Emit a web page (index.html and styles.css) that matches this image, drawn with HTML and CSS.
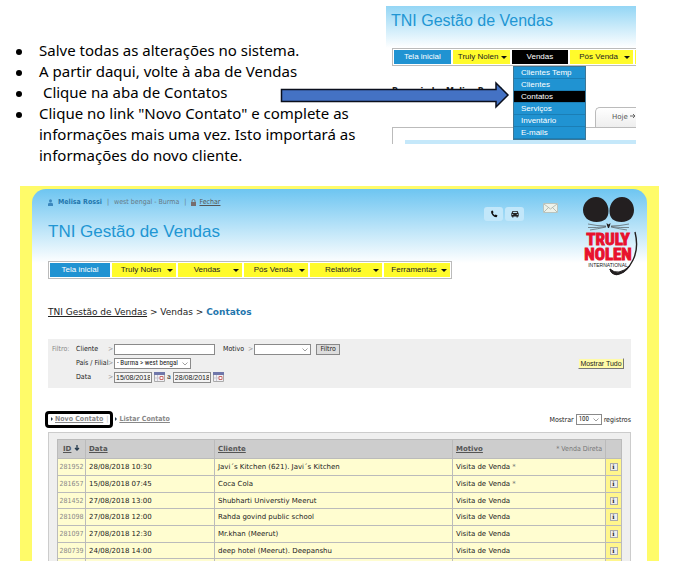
FILE: index.html
```html
<!DOCTYPE html>
<html lang="pt">
<head>
<meta charset="utf-8">
<title>TNI Gestão de Vendas</title>
<link rel="stylesheet" href="styles.css">
</head>
<body>
<section class="intro">
  <ul class="steps">
    <li>Salve todas as alterações no sistema.</li>
    <li>A partir daqui, volte à aba de Vendas</li>
    <li>&nbsp;Clique na aba de Contatos</li>
    <li>Clique no link "Novo Contato" e complete as informações mais uma vez. Isto importará as informações do novo cliente.</li>
  </ul>
  <div class="preview">
    <h2 class="title preview-title">TNI Gestão de Vendas</h2>
    <nav class="nav preview-nav">
      <a class="item home" href="#">Tela inicial</a>
      <a class="item drop" href="#">Truly Nolen</a>
      <a class="item open" href="#">Vendas</a>
      <a class="item drop wide" href="#">Pós Venda</a>
      <a class="item" href="#" aria-label="Relatórios"></a>
    </nav>
    <p class="welcome">Bem-vindo, Melisa Rossi</p>
    <div class="tab">Hoje <svg width="6" height="6" viewBox="0 0 6 6"><path d="M0 3h5M3 1l2 2-2 2" fill="none" stroke="#666"/></svg></div>
    <div class="sheet"><div class="sheet-bar"></div></div>
    <div class="menu">
      <a href="#">Clientes Temp</a>
      <a href="#">Clientes</a>
      <a class="current" href="#">Contatos</a>
      <a href="#">Serviços</a>
      <a href="#">Inventário</a>
      <a href="#">E-mails</a>
    </div>
    <svg class="arrow" width="230" height="28" viewBox="0 0 230 28"><path d="M1.500 8.500H216V2l12 12-12 12V20.500H1.500z" fill="#4472c4" stroke="#0a0f1c" stroke-width="1.500"/></svg>
  </div>
</section>

<main class="frame">
  <div class="page">
    <header class="head">
      <div class="head-main">
        <p class="user">
          <svg width="5" height="7" viewBox="0 0 5 7"><circle cx="2.500" cy="1.700" r="1.500" fill="#3b87bd"/><path d="M0 7V5q0-1.500 2.500-1.500T5 5v2z" fill="#3b87bd"/></svg>
          <b>Melisa Rossi</b><i>|</i>west bengal - Burma<i>|</i>
          <svg width="5" height="7" viewBox="0 0 5 7"><path d="M1 3V2q0-1.500 1.500-1.500T4 2v1" fill="none" stroke="#777"/><path d="M0 3h5v4H0z" fill="#776d6d"/></svg>
          <a href="#">Fechar</a>
        </p>
        <h1 class="title">TNI Gestão de Vendas</h1>
        <nav class="nav main-nav">
          <a class="item home" href="#">Tela inicial</a>
          <a class="item drop" href="#">Truly Nolen</a>
          <a class="item drop" href="#">Vendas</a>
          <a class="item drop" href="#">Pós Venda</a>
          <a class="item drop long" href="#">Relatórios</a>
          <a class="item drop last" href="#">Ferramentas</a>
        </nav>
      </div>
      <div class="tools">
        <button class="tool" type="button" aria-label="Telefone"><svg width="8" height="8" viewBox="0 0 8 8"><path d="M1.200 1l1.400-.6 1 1.800-.8.8q.6 1.500 2 2.200l.9-.7 1.800 1.100-.7 1.500Q4.500 7.500 2.500 5.200T1.200 1z" fill="#111"/></svg></button>
        <button class="tool" type="button" aria-label="Veículo"><svg width="8" height="8" viewBox="0 0 8 8"><path d="M.3 3.500L1.500 1h5l1.200 2.500v3h-1V7.500H5.600v-1H2.400v1H1.200v-1H.3z" fill="#222"/><path d="M1.700 3l.6-1.200h3.400L6.300 3z" fill="#b9dff2"/><path d="M1 4.300h1.300v.8H1zM5.700 4.300H7v.8H5.700z" fill="#b9dff2"/></svg></button>
        <svg class="mail" width="15" height="10" viewBox="0 0 15 10"><path d="M.5.500h14v9H.5z" fill="#eef2ea" stroke="#b9c4bf"/><path d="M1 1l6.500 5L14 1M1 9l4.500-4.500M14 9L9.500 4.500" fill="none" stroke="#a6b0a8" stroke-width=".8"/></svg>
      </div>
      <svg class="logo" width="58" height="82" viewBox="0 0 58 82" role="img" aria-label="Truly Nolen International">
        <path d="M26.500 15c0 7-4 11-12 11S1 21 1 14 7 1 14 1s12.500 6 12.500 14zM27.500 15c0 7 4 11 12 11S52 21 52 14 47 1 40 1 27.500 7 27.500 15z" fill="#231f20"/>
        <path d="M24.500 27l2 1.500 2-1.500-.5 2.500-1 2.500h-1l-1-2.500z" fill="#231f20"/>
        <path d="M24 30Q15 30 6 28M24 30.500Q14 32 6 31.500M24 31Q15 33 8 34M29 30q9 0 18-2M29 30.500q10 1.500 18 1M29 31q9 2 16 3" fill="none" stroke="#444" stroke-width=".6"/>
        <text class="logo-name" x="26" y="49" text-anchor="middle">TRULY</text>
        <text class="logo-name" x="26" y="64" text-anchor="middle">NOLEN</text>
        <text class="logo-sub" x="26" y="71" text-anchor="middle">INTERNATIONAL</text>
        <path d="M53 36Q57 52 51 64T37 78Q31 80 28 73" fill="none" stroke="#231f20" stroke-width="1.400"/>
        <path d="M48 70Q43 77 36 78T28 73Q32 77 37 76T48 70z" fill="#231f20" stroke="#231f20"/>
      </svg>
    </header>

    <p class="crumbs"><a href="#">TNI Gestão de Vendas</a> &gt; Vendas &gt; <b>Contatos</b></p>

    <form class="filter">
      <span class="filter-name">Filtro:</span>
      <div class="fields">
        <div class="row">
          <label class="name" for="cliente">Cliente</label><span class="gt">&gt;</span>
          <input class="box client" id="cliente" type="text">
          <label class="reason-name" for="motivo">Motivo</label><span class="gt">&gt;</span>
          <span class="pick reason"><select class="box" id="motivo"><option></option></select><svg width="6" height="4" viewBox="0 0 6 4"><path d="M.5.500L3 3 5.500.500" fill="none" stroke="#888" stroke-width=".8"/></svg></span>
          <button class="go" type="button">Filtro</button>
        </div>
        <div class="row">
          <label class="name" for="filial">País / Filial</label><span class="gt">&gt;</span>
          <span class="pick branch"><select class="box" id="filial"><option>- Burma &gt; west bengal</option></select><svg width="6" height="4" viewBox="0 0 6 4"><path d="M.5.500L3 3 5.500.500" fill="none" stroke="#888" stroke-width=".8"/></svg></span>
        </div>
        <div class="row">
          <label class="name" for="de">Data</label><span class="gt">&gt;</span>
          <input class="box date" id="de" type="text" value="15/08/2018">
          <svg class="cal" width="11" height="10" viewBox="0 0 11 10"><path d="M.5.500h10v9H.5z" fill="#f1f0f4" stroke="#aaa"/><path d="M0 0h11v3H0z" fill="#7077aa"/><path d="M3.500 3v6M1 6h5" stroke="#c8c8d4"/><path d="M6 4.500h3v3H6z" fill="#fff" stroke="#c96a6a"/></svg>
          <label class="to" for="ate">a</label>
          <input class="box date" id="ate" type="text" value="28/08/2018">
          <svg class="cal" width="11" height="10" viewBox="0 0 11 10"><path d="M.5.500h10v9H.5z" fill="#f1f0f4" stroke="#aaa"/><path d="M0 0h11v3H0z" fill="#7077aa"/><path d="M3.500 3v6M1 6h5" stroke="#c8c8d4"/><path d="M6 4.500h3v3H6z" fill="#fff" stroke="#c96a6a"/></svg>
        </div>
      </div>
      <button class="all" type="button">Mostrar Tudo</button>
    </form>

    <div class="actions">
      <span class="ring"><a href="#">Novo Contato</a><i>|</i></span>
      <span class="plain"><a href="#">Listar Contato</a></span>
      <label class="count" for="count">Mostrar</label>
      <span class="pick amount"><select class="box" id="count"><option>100</option></select><svg width="6" height="4" viewBox="0 0 6 4"><path d="M.5.500L3 3 5.500.500" fill="none" stroke="#888" stroke-width=".8"/></svg></span>
      <span>registros</span>
    </div>

    <div class="list">
      <table>
        <colgroup><col class="c-id"><col class="c-date"><col><col class="c-reason"><col class="c-info"></colgroup>
        <thead>
          <tr><th><a href="#">ID</a> <svg width="6" height="6" viewBox="0 0 6 6"><path d="M3 0v5M1 3l2 2 2-2" fill="none" stroke="#23394d" stroke-width="1.300"/></svg></th><th><a href="#">Data</a></th><th><a href="#">Cliente</a></th><th><div class="split"><a href="#">Motivo</a><span>* Venda Direta</span></div></th><th></th></tr>
        </thead>
        <tbody>
          <tr><td>281952</td><td>28/08/2018 10:30</td><td>Javi´s Kitchen (621). Javi´s Kitchen</td><td>Visita de Venda <em>*</em></td><td><button class="info" type="button">i</button></td></tr>
          <tr><td>281657</td><td>15/08/2018 07:45</td><td>Coca Cola</td><td>Visita de Venda <em>*</em></td><td><button class="info" type="button">i</button></td></tr>
          <tr><td>281452</td><td>27/08/2018 13:00</td><td>Shubharti Universtiy Meerut</td><td>Visita de Venda</td><td><button class="info" type="button">i</button></td></tr>
          <tr><td>281098</td><td>27/08/2018 12:00</td><td>Rahda govind public school</td><td>Visita de Venda</td><td><button class="info" type="button">i</button></td></tr>
          <tr><td>281097</td><td>27/08/2018 12:30</td><td>Mr.khan (Meerut)</td><td>Visita de Venda</td><td><button class="info" type="button">i</button></td></tr>
          <tr><td>280739</td><td>24/08/2018 14:00</td><td>deep hotel (Meerut). Deepanshu</td><td>Visita de Venda</td><td><button class="info" type="button">i</button></td></tr>
          <tr class="cut"><td></td><td></td><td></td><td></td><td></td></tr>
        </tbody>
      </table>
    </div>
  </div>
</main>
</body>
</html>
```

FILE: styles.css
```css
* { box-sizing: border-box; }

body {
  margin: 0;
  background: #fff;
  color: #222;
  font: 7px/10px "DejaVu Sans Condensed", "DejaVu Sans", sans-serif;
}

h1, h2, p, ul { margin: 0; padding: 0; }
h1, h2 { font-weight: 400; }
button, input, select { margin: 0; padding: 0; font: inherit; color: inherit; }
a { color: inherit; }

/* Instructions and menu preview */
.intro {
  display: grid;
  grid-template-columns: 386fr 250fr;
  padding: 6px 50px 20px 0;
}

.steps {
  padding: 34px 24px 0 39px;
  color: #000;
  font: 15px/21px "Noto Sans", sans-serif;
  list-style: none;
}

.steps li { position: relative; }

.steps li::before {
  content: "";
  position: absolute;
  left: -23px;
  top: 9px;
  width: 6px;
  height: 6px;
  border-radius: 50%;
  background: #000;
}

.preview {
  position: relative;
  align-self: start;
  background: linear-gradient(#94d6f5, #fff 42px);
}

.title {
  color: #2196d3;
  font-family: "Liberation Sans", sans-serif;
}

.preview-title {
  padding: 4px 0 0 5px;
  font-size: 16px;
  line-height: 22px;
}

.nav {
  display: flex;
  gap: 2px;
  padding: 1px;
  border: 1px solid #bbb;
  background: #fff;
  font: 8px/14px "Liberation Sans", sans-serif;
}

.item {
  position: relative;
  flex: 1 1 0;
  background: #fffb2b;
  color: #222;
  text-align: center;
  text-decoration: none;
  white-space: nowrap;
}

.drop { padding-right: 6px; }

.drop::after {
  content: "";
  position: absolute;
  right: 3px;
  top: 6px;
  border: 3px solid transparent;
  border-top-color: #111;
  border-bottom: 0;
}

.home { background: #2093d2; color: #fff; }
.open { background: #000; color: #fff; }

.preview-nav { margin: 16px 0 0 6px; border-right: 0; padding-right: 0; }
.preview-nav .item { flex: 0 1 58px; }
.preview-nav .wide { flex-basis: 64px; }
.preview-nav .item:last-child { flex: 1 0 1px; }

.welcome {
  padding: 21px 0 0 6px;
  font: bold 8px/10px "DejaVu Sans", sans-serif;
}

.tab {
  width: 41px;
  margin: 10px 0 0 auto;
  padding-left: 16px;
  border: 1px solid #bbb;
  border-width: 1px 0 0 1px;
  border-radius: 5px 0 0 0;
  background: linear-gradient(#fff, #eee);
  color: #555;
  font: 7px/19px "DejaVu Sans", sans-serif;
  white-space: nowrap;
}

.sheet {
  margin-left: 6px;
  padding: 12px 0 0 12px;
  border: 1px solid #bbb;
  border-width: 1px 0 0 1px;
}

.sheet-bar { height: 4px; background: #c5e8fa; }

.menu {
  position: absolute;
  left: 127px;
  top: 60px;
  display: grid;
  width: 73px;
  border: 1px solid #3d7796;
  background: #2093d2;
  font: 8px/12px "Liberation Sans", sans-serif;
}

.menu a {
  padding-left: 7px;
  border-bottom: 1px solid #1b7eb5;
  color: #fff;
  height: 12px;
  text-decoration: none;
}

.menu a.current { background: #000; }

.arrow {
  position: absolute;
  left: -106px;
  top: 75px;
}

/* Application frame */
.frame {
  margin: 0 27px 0 20px;
  padding: 3px 12px 0;
  background: #fffb69;
}

.page {
  padding: 0 16px;
  border-radius: 14px 14px 0 0;
  background: linear-gradient(#6dc5f1, #fff 74px);
}

.head {
  display: flex;
  padding-top: 7px;
  margin-right: -9px;
}

.head-main { flex: 0 0 404px; }

.user {
  display: flex;
  align-items: center;
  color: #667a86;
  line-height: 12px;
}

.user b { margin-left: 5px; color: #1f76ad; }
.user i { margin: 0 5px; font-style: normal; }
.user a { margin-left: 3px; color: #555; }

.head .title { font-size: 17px; line-height: 24px; padding: 12px 0 0; }
.main-nav { margin: 17px 0 0; }
.main-nav .item { flex: 0 1 64px; }
.main-nav .home { flex-basis: 60px; }
.main-nav .long { flex-basis: 72px; }
.main-nav .last { flex-basis: 66px; }

.tools {
  display: flex;
  align-items: flex-start;
  gap: 2px;
  margin: 11px auto 0 32px;
}

.tool {
  display: grid;
  place-items: center;
  width: 19px;
  height: 14px;
  border: 0;
  border-radius: 3px;
  background: #c2e7fa;
}

.mail { margin: -4px 0 0 17px; }
.logo { flex: none; }

.logo-name {
  fill: #e8112d;
  stroke: #e8112d;
  stroke-width: 1px;
  font: bold 17px "Roboto Condensed", "Liberation Sans", sans-serif;
}

.logo-sub { fill: #222; font: 5px "Liberation Sans", sans-serif; }

.crumbs {
  padding: 26px 0 20px;
  font: 9px/14px "DejaVu Sans", sans-serif;
}

.crumbs b { color: #1f76ad; }

.filter {
  display: flex;
  align-items: center;
  padding: 3px 7px 4px 4px;
  background: #efefef;
}

.filter-name { align-self: flex-start; width: 24px; line-height: 14px; color: #888; }
.fields { flex: 1; }

.row { display: flex; align-items: center; height: 14px; }
.row .name { width: 32px; white-space: nowrap; }
.gt { width: 6px; color: #999; }

.box {
  display: block;
  height: 11px;
  padding: 0 2px;
  border: 1px solid #8a8a8a;
  border-radius: 0;
  background: #fff;
  font: 7px/9px "Liberation Sans", sans-serif;
  appearance: none;
}

.client { width: 101px; }
.reason-name { margin: 0 4px 0 8px; }
.pick { position: relative; }
.pick .box { width: 100%; font-family: "Roboto Condensed", "Liberation Sans", sans-serif; }
.pick svg { position: absolute; right: 3px; top: 4px; }
.reason { width: 57px; }
.branch { width: 77px; }
.amount { width: 26px; }

.date { width: 38px; padding: 0 1px; background: #f4f4f4; }
.cal { margin: 0 2px; }
.to { margin-right: 2px; }

.go {
  width: 24px;
  height: 11px;
  margin-left: 5px;
  border: 1px solid #888;
  background: #ddd;
  line-height: 9px;
}

.all {
  width: 46px;
  height: 11px;
  border: 1px solid #777;
  border-color: #eee #777 #777 #eee;
  background: #fffba8;
  font: 7px/9px "Liberation Sans", sans-serif;
  white-space: nowrap;
}

.actions {
  display: flex;
  align-items: center;
  gap: 2px;
  margin: 23px 0 4px -3px;
}

.actions a { color: #888; }

.ring, .plain { font-weight: 700; line-height: 11px; white-space: nowrap; }

.ring {
  padding: 0 2px 0 3px;
  border: 3px solid #000;
  border-radius: 4px;
}

.ring::before, .plain::before {
  content: "";
  display: inline-block;
  margin-right: 2px;
  border: 2px solid transparent;
  border-left-color: #23394d;
  border-right: 0;
}

.ring i { margin-left: 3px; color: #bbb; font-style: normal; font-weight: 400; }
.count { margin-left: auto; }

.list {
  padding: 6px 8px 0;
  border: 1px solid #ccc;
  border-bottom: 0;
  background: #efefef;
}

table {
  width: 100%;
  border-collapse: collapse;
  table-layout: fixed;
  font: 7px/10px "DejaVu Sans", sans-serif;
}

.c-id { width: 28px; }
.c-date { width: 129px; }
.c-reason { width: 153px; }
.c-info { width: 16px; }

th, td {
  padding: 0 3px;
  border: 1px solid #bbb;
  text-align: left;
  white-space: nowrap;
}

th { height: 19px; background: #cdcdcd; color: #555; }
th:first-child { padding-left: 5px; }
td { height: 17px; background: #fffdd0; }
tr:nth-child(3n) td { height: 16px; }
td:first-child { color: #888; text-align: center; padding: 0; font-family: "DejaVu Sans Condensed", sans-serif; }
td:last-child { padding: 0; background: #fff68c; }
td em { color: #777; font-style: normal; }
.cut td { height: 2px; border-bottom: 0; }

.split { display: flex; justify-content: space-between; }
.split span { color: #777; font-family: "DejaVu Sans Condensed", sans-serif; font-weight: 400; }

.info {
  display: block;
  width: 8px;
  height: 8px;
  margin: 0 auto;
  border: 1px solid #aaa;
  background: #eee;
  font: bold 6px/6px "DejaVu Serif", serif;
}
```
